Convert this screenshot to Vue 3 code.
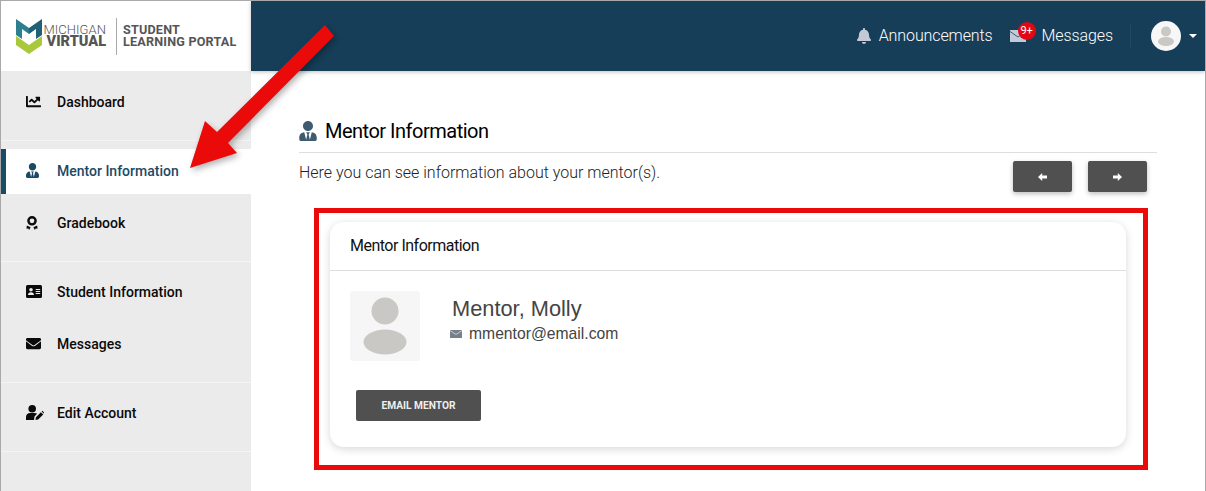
<script setup>
const navGroups = [
  [{ label: 'Dashboard', icon: 'chart' }],
  [
    { label: 'Mentor Information', icon: 'tie', active: true },
    { label: 'Gradebook', icon: 'award' }
  ],
  [
    { label: 'Student Information', icon: 'card' },
    { label: 'Messages', icon: 'mail' }
  ],
  [{ label: 'Edit Account', icon: 'edit' }]
]

const tiePath =
  'M224 256c70.7 0 128-57.3 128-128S294.7 0 224 0 96 57.3 96 128s57.3 128 128 128zm95.8 32.6L272 480l-32-136 32-56h-96l32 56-32 136-47.8-191.4C56.9 292 0 350.3 0 422.4V464c0 26.5 21.5 48 48 48h352c26.5 0 48-21.5 48-48v-41.6c0-72.1-56.9-130.4-128.2-133.8z'
const mailPath =
  'M502.3 190.8c3.9-3.1 9.7-.2 9.7 4.7V400c0 26.5-21.5 48-48 48H48c-26.5 0-48-21.5-48-48V195.6c0-5 5.7-7.8 9.7-4.7 22.4 17.4 52.1 39.5 154.1 113.6 21.1 15.4 56.7 47.8 92.2 47.6 35.7.3 72-32.8 92.3-47.6 102-74.1 131.6-96.3 154-113.7zM256 320c23.2.4 56.6-29.2 73.4-41.4 132.7-96.3 142.8-104.7 173.4-128.7 5.8-4.5 9.2-11.5 9.2-18.9v-19c0-26.5-21.5-48-48-48H48C21.5 64 0 85.5 0 112v19c0 7.4 3.4 14.3 9.2 18.9 30.6 23.9 40.7 32.4 173.4 128.7 16.8 12.2 50.2 41.8 73.4 41.4z'
const chartPath =
  'M496 384H64V80c0-8.84-7.16-16-16-16H16C7.16 64 0 71.16 0 80v336c0 17.67 14.33 32 32 32h464c8.84 0 16-7.16 16-16v-32c0-8.84-7.16-16-16-16zM464 96H345.94c-21.38 0-32.09 25.85-16.97 40.97l32.4 32.4L288 242.75l-73.37-73.37c-12.5-12.5-32.76-12.5-45.25 0l-68.69 68.69c-6.25 6.25-6.25 16.38 0 22.63l22.62 22.62c6.25 6.25 16.38 6.25 22.63 0L192 237.25l73.37 73.37c12.5 12.5 32.76 12.5 45.25 0l96-96 32.4 32.4c15.12 15.12 40.97 4.41 40.97-16.97V112c.01-8.84-7.15-16-15.99-16z'
const bellPath =
  'M224 512c35.32 0 63.97-28.65 63.97-64H160.03c0 35.35 28.65 64 63.97 64zm215.39-149.71c-19.32-20.76-55.47-51.99-55.47-154.29 0-77.7-54.48-139.9-127.94-155.16V32c0-17.67-14.32-32-31.98-32s-31.98 14.33-31.98 32v20.84C118.56 68.1 64.08 130.3 64.08 208c0 102.3-36.15 133.53-55.47 154.29-6 6.45-8.66 14.16-8.61 21.71.11 16.4 12.98 32 32.1 32h383.8c19.12 0 32-15.6 32.1-32 .05-7.55-2.61-15.27-8.61-21.71z'
</script>

<template>
  <div class="page">
    <aside class="sidebar">
      <div class="brand">
        <svg class="brand__mark" viewBox="0 0 26 35" width="26" height="35">
          <path fill="#2b7f8f" d="M0 0l13 9 0 6-7-5v10l-6-4z" />
          <path fill="#1f5f78" d="M26 0L13 9v6l7-5v10l6-4z" />
          <path fill="#a9c83c" d="M0 17l13 9 13-9v9L13 35 0 26z" />
        </svg>
        <div class="brand__name">
          <span class="brand__light">MICHIGAN</span>
          <span class="brand__bold">VIRTUAL</span>
        </div>
        <div class="brand__title">STUDENT<br />LEARNING PORTAL</div>
      </div>
      <nav class="nav">
        <div v-for="(group, i) in navGroups" :key="i" class="nav__group">
          <a
            v-for="item in group"
            :key="item.label"
            class="nav__item"
            :class="{ 'nav__item--active': item.active }"
          >
            <span class="nav__icon">
              <svg v-if="item.icon === 'chart'" viewBox="0 0 512 512" width="15" height="15">
                <path fill="currentColor" :d="chartPath" />
              </svg>
              <svg v-else-if="item.icon === 'tie'" viewBox="0 0 448 512" width="13" height="15">
                <path fill="currentColor" :d="tiePath" />
              </svg>
              <svg v-else-if="item.icon === 'award'" viewBox="0 0 12 14" width="12" height="14">
                <circle cx="6" cy="4.800" r="3.600" fill="none" stroke="currentColor" stroke-width="2.400" />
                <path fill="currentColor" d="M.8 9.500l2.800 1.200 1 .3-1.400 3-.9-1.400-1.800.1zM11.200 9.500l-2.800 1.200-1 .3 1.400 3 .9-1.400 1.800.1z" />
              </svg>
              <svg v-else-if="item.icon === 'card'" viewBox="0 0 16 13" width="16" height="13">
                <path
                  fill="currentColor"
                  fill-rule="evenodd"
                  d="M1.500 0h13A1.500 1.500 0 0 1 16 1.500v10a1.500 1.500 0 0 1-1.500 1.500h-13A1.500 1.500 0 0 1 0 11.500v-10A1.500 1.500 0 0 1 1.500 0zM5 3a1.800 1.800 0 1 0 0 3.600A1.800 1.800 0 0 0 5 3zM2 10h6c0-1.700-1.100-2.800-3-2.800S2 8.300 2 10zM9.700 4V5h4.500V4zM9.700 6V7h4.500V6zM9.700 8V9h4.500V8z"
                />
              </svg>
              <svg v-else-if="item.icon === 'mail'" viewBox="0 0 512 512" width="15" height="15">
                <path fill="currentColor" :d="mailPath" />
              </svg>
              <svg v-else viewBox="0 0 18 15" width="18" height="15">
                <circle cx="6.200" cy="3.800" r="3.800" fill="currentColor" />
                <path fill="currentColor" d="M0 15v-3c0-2.500 2-4 4-4h4.500c1 0 1.900.3 2.600.8L8.500 11.500 8 15z" />
                <path fill="currentColor" d="M9.500 15l.4-2.700 5-5 2.300 2.300-5 5zM15.600 6.600l.8-.8 2 2-.8.8z" />
              </svg>
            </span>
            <span>{{ item.label }}</span>
          </a>
        </div>
      </nav>
    </aside>

    <div class="content">
      <header class="topbar">
        <a class="topbar__link">
          <svg viewBox="0 0 448 512" width="14" height="16">
            <path fill="#c3c9d6" :d="bellPath" />
          </svg>
          <span class="topbar__text">Announcements</span>
        </a>
        <a class="topbar__link topbar__link--messages">
          <span class="topbar__mail">
            <svg viewBox="0 0 16 12" width="16" height="12">
              <path fill="#c3c9d6" d="M0 0h16v12H0z" />
              <path fill="none" stroke="#1a4159" stroke-width="0.8" d="M0 1.500l8 5.500 8-5.500" />
            </svg>
            <span class="topbar__badge">9+</span>
          </span>
          <span class="topbar__text">Messages</span>
        </a>
        <span class="topbar__sep"></span>
        <span class="topbar__avatar">
          <svg viewBox="0 0 30 30" width="30" height="30">
            <circle cx="15" cy="15" r="15" fill="#f7f7f7" />
            <circle cx="15" cy="10.500" r="5" fill="#c9c8c4" />
            <ellipse cx="15" cy="20.500" rx="8" ry="4.500" fill="#c9c8c4" />
          </svg>
        </span>
        <span class="topbar__caret"></span>
      </header>

      <main class="main">
        <h1 class="main__title">
          <svg viewBox="0 0 448 512" width="18" height="20">
            <path fill="#3f5b70" :d="tiePath" />
          </svg>
          <span>Mentor Information</span>
        </h1>
        <div class="main__intro">
          <p>Here you can see information about your mentor(s).</p>
          <div class="main__pager">
            <button class="pager-btn" type="button" aria-label="Previous">
              <svg viewBox="0 0 9 8" width="9" height="8">
                <path fill="#fff" d="M4.200 0v2.500H9v3H4.200V8L0 4z" />
              </svg>
            </button>
            <button class="pager-btn" type="button" aria-label="Next">
              <svg viewBox="0 0 9 8" width="9" height="8">
                <path fill="#fff" d="M4.800 0v2.500H0v3h4.800V8L9 4z" />
              </svg>
            </button>
          </div>
        </div>

        <section class="card">
          <h2 class="card__head">Mentor Information</h2>
          <div class="card__body">
            <div class="mentor">
              <div class="mentor__photo">
                <svg viewBox="0 0 70 70" width="70" height="70">
                  <circle cx="35" cy="20" r="13.500" fill="#c9c8c4" />
                  <ellipse cx="35" cy="51" rx="21.500" ry="12.500" fill="#c9c8c4" />
                </svg>
              </div>
              <div class="mentor__info">
                <div class="mentor__name">Mentor, Molly</div>
                <div class="mentor__email">
                  <svg viewBox="0 0 12 8" width="12" height="8">
                    <path fill="#76808a" d="M0 0h12v8H0z" />
                    <path fill="none" stroke="#fff" stroke-width="0.6" d="M0 .5l6 4 6-4" />
                  </svg>
                  <span>mmentor@email.com</span>
                </div>
              </div>
            </div>
            <button class="email-btn" type="button">EMAIL MENTOR</button>
          </div>
        </section>
      </main>
    </div>

    <!-- annotations drawn on top of the screenshot -->
    <div class="callout-box"></div>
    <svg class="callout-arrow" viewBox="0 0 1206 491" width="1206" height="491">
      <polygon fill="#eb0a0a" points="325,25 334,36 228,143 237,153 190,168 205,121 217,132" />
    </svg>
  </div>
</template>

<style>
html,
body {
  margin: 0;
  background: #fff;
}
</style>

<style scoped>
.page {
  position: relative;
  box-sizing: border-box;
  width: 1206px;
  height: 491px;
  overflow: hidden;
  display: flex;
  border: 1px solid #a9a9a9;
  border-bottom: 0;
  background: #fff;
  font-family: Roboto, "Liberation Sans", sans-serif;
  color: #000;
}

.sidebar {
  flex: 0 0 250px;
  display: flex;
  flex-direction: column;
  background: #ebebeb;
}

.brand {
  flex: 0 0 70px;
  display: flex;
  align-items: center;
  box-sizing: border-box;
  padding-left: 15px;
  background: #fff;
}

.brand__mark {
  flex: none;
}

.brand__name {
  box-sizing: border-box;
  display: flex;
  flex-direction: column;
  align-items: flex-end;
  justify-content: center;
  width: 75px;
  height: 37px;
  padding: 0 10px 1px 0;
  border-right: 1px solid #a9a9a9;
  color: #555;
  line-height: 11.500px;
}

.brand__light {
  font-size: 13px;
  font-weight: 300;
  letter-spacing: 0.05px;
}

.brand__bold {
  font-size: 14.500px;
  font-weight: 900;
}

.brand__title {
  margin-left: 6px;
  font-size: 12.600px;
  font-weight: 700;
  line-height: 12px;
  letter-spacing: 0.2px;
  color: #555;
  white-space: nowrap;
}

.nav {
  flex: 1;
  padding-top: 1px;
}

.nav__group {
  display: flex;
  flex-direction: column;
  gap: 7px;
  padding: 8px 0 15px;
  border-bottom: 1px solid #f4f4f4;
}

.nav__item {
  box-sizing: border-box;
  display: flex;
  align-items: center;
  height: 45px;
  padding: 0 0 2px 25px;
  font-size: 14px;
  font-weight: 500;
  color: #0a0a0a;
}

.nav__item--active {
  padding-left: 20px;
  border-left: 5px solid #1a4a66;
  background: #fff;
  color: #1a4a66;
}

.nav__icon {
  flex: 0 0 31px;
  display: flex;
  align-items: center;
}

.content {
  flex: 1;
  min-width: 0;
  display: flex;
  flex-direction: column;
}

.topbar {
  flex: 0 0 70px;
  display: flex;
  align-items: center;
  justify-content: flex-end;
  padding-right: 8px;
  background: #163e58;
  box-shadow: 0 1px 4px rgba(0, 0, 0, 0.25);
  color: #fff;
  font-size: 16px;
  font-weight: 300;
}

.topbar__link {
  display: flex;
  align-items: center;
  gap: 8px;
}

.topbar__text {
  padding-bottom: 2px;
  letter-spacing: -0.1px;
}

.topbar__link--messages {
  gap: 16px;
  margin-left: 17px;
}

.topbar__mail {
  position: relative;
  display: flex;
}

.topbar__badge {
  position: absolute;
  top: -8px;
  left: 8px;
  width: 18px;
  height: 18px;
  border-radius: 50%;
  background: #e30613;
  color: #fff;
  font-size: 11px;
  font-weight: 400;
  line-height: 18px;
  text-align: center;
}

.topbar__sep {
  width: 1px;
  height: 22px;
  margin: 0 20px 0 17px;
  background: #1f4a66;
}

.topbar__avatar {
  display: flex;
}

.topbar__caret {
  margin-left: 8px;
  border: 4px solid transparent;
  border-top-color: #fff;
  border-bottom: 0;
}

.main {
  flex: 1;
  padding: 46px 48px 0;
}

.main__title {
  box-sizing: border-box;
  display: flex;
  align-items: center;
  gap: 8px;
  height: 36px;
  margin: 0;
  padding-bottom: 7px;
  border-bottom: 1px solid #dedede;
  font-size: 20px;
  font-weight: 400;
  letter-spacing: -0.5px;
  color: #000;
}

.main__intro {
  display: flex;
  justify-content: space-between;
  padding: 8px 10px 0 0;
}

.main__intro p {
  margin: 0;
  padding-top: 2px;
  font-size: 16px;
  font-weight: 300;
  line-height: 19px;
  color: #222;
}

.main__pager {
  display: flex;
  gap: 16px;
}

.pager-btn {
  display: flex;
  align-items: center;
  justify-content: center;
  width: 59px;
  height: 31px;
  padding: 0;
  border: 0;
  border-radius: 2px;
  background: #505050;
  box-shadow: 0 2px 5px rgba(0, 0, 0, 0.26);
}

.card {
  margin: 30px 0 0 31px;
  width: 796px;
  height: 225px;
  border-radius: 14px;
  background: #fff;
  box-shadow: 0 2px 8px rgba(0, 0, 0, 0.16);
}

.card__head {
  box-sizing: border-box;
  height: 49px;
  margin: 0;
  padding: 0 20px;
  border-bottom: 1px solid #dedede;
  font-size: 16px;
  font-weight: 400;
  line-height: 47px;
  letter-spacing: -0.5px;
  color: #111;
}

.card__body {
  padding: 20px;
}

.mentor {
  display: flex;
}

.mentor__photo {
  flex: 0 0 70px;
  height: 70px;
  border-radius: 3px;
  background: #f6f6f6;
}

.mentor__info {
  margin-left: 30px;
  font-family: "Liberation Sans", Arial, sans-serif;
  color: #444;
}

.mentor__name {
  padding: 5px 0 0 2px;
  font-size: 21.800px;
  line-height: 26px;
}

.mentor__email {
  display: flex;
  align-items: center;
  gap: 7px;
  padding-top: 2px;
  font-size: 15.700px;
  line-height: 20px;
}

.email-btn {
  display: block;
  width: 125px;
  height: 31px;
  margin: 29px 0 0 6px;
  padding: 0;
  border: 0;
  border-radius: 2px;
  background: #505050;
  color: #eee;
  font-family: Roboto, sans-serif;
  font-size: 10.200px;
  font-weight: 700;
}

.callout-box {
  position: absolute;
  left: 313px;
  top: 207px;
  width: 834px;
  height: 262px;
  box-sizing: border-box;
  border: 5px solid #eb0a0a;
}

.callout-arrow {
  position: absolute;
  left: -1px;
  top: -1px;
  filter: drop-shadow(2px 3px 3px rgba(0, 0, 0, 0.3));
  pointer-events: none;
}
</style>
